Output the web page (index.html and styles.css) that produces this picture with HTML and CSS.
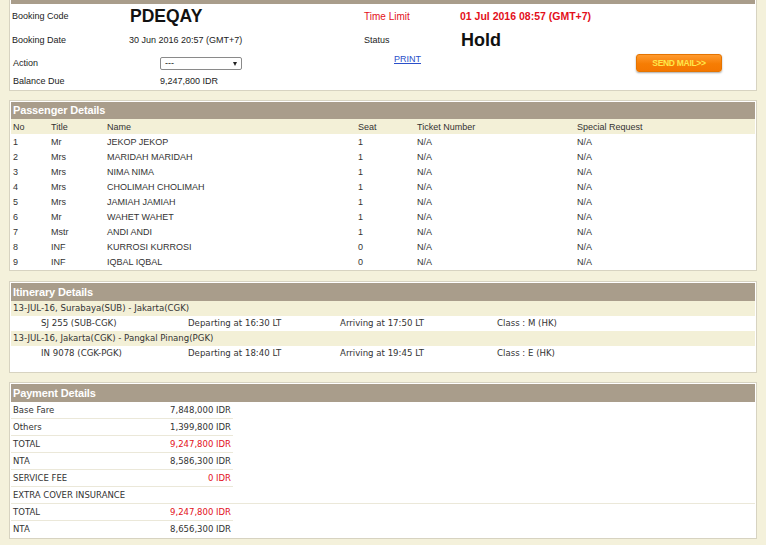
FILE: index.html
```html
<!DOCTYPE html>
<html>
<head>
<meta charset="utf-8">
<title>Booking PDEQAY</title>
<link rel="stylesheet" href="styles.css">
</head>
<body>
<div class="page">
  <section class="panel booking">
    <div class="bar"></div>
    <div class="info">
      <div class="lbl">Booking Code</div>
      <div class="code">PDEQAY</div>
      <div class="lbl red">Time Limit</div>
      <div class="limit">01 Jul 2016 08:57 (GMT+7)</div>
      <div class="lbl">Booking Date</div>
      <div class="val">30 Jun 2016 20:57 (GMT+7)</div>
      <div class="lbl">Status</div>
      <div class="status">Hold</div>
    </div>
    <div class="actions">
      <div class="lbl">Action</div>
      <div class="sel-wrap"><select class="sel"><option>---</option></select></div>
      <a class="print" href="#">PRINT</a>
      <button class="mail">SEND MAIL&gt;&gt;</button>
      <div class="lbl">Balance Due</div>
      <div class="val">9,247,800 IDR</div>
    </div>
  </section>

  <section class="panel pax-panel">
    <div class="head">Passenger Details</div>
    <table class="pax">
      <colgroup><col class="c-no"><col class="c-title"><col class="c-name"><col class="c-seat"><col class="c-ticket"><col></colgroup>
      <thead>
        <tr><th>No</th><th>Title</th><th>Name</th><th>Seat</th><th>Ticket Number</th><th>Special Request</th></tr>
      </thead>
      <tbody>
        <tr><td>1</td><td>Mr</td><td>JEKOP JEKOP</td><td>1</td><td>N/A</td><td>N/A</td></tr>
        <tr><td>2</td><td>Mrs</td><td>MARIDAH MARIDAH</td><td>1</td><td>N/A</td><td>N/A</td></tr>
        <tr><td>3</td><td>Mrs</td><td>NIMA NIMA</td><td>1</td><td>N/A</td><td>N/A</td></tr>
        <tr><td>4</td><td>Mrs</td><td>CHOLIMAH CHOLIMAH</td><td>1</td><td>N/A</td><td>N/A</td></tr>
        <tr><td>5</td><td>Mrs</td><td>JAMIAH JAMIAH</td><td>1</td><td>N/A</td><td>N/A</td></tr>
        <tr><td>6</td><td>Mr</td><td>WAHET WAHET</td><td>1</td><td>N/A</td><td>N/A</td></tr>
        <tr><td>7</td><td>Mstr</td><td>ANDI ANDI</td><td>1</td><td>N/A</td><td>N/A</td></tr>
        <tr><td>8</td><td>INF</td><td>KURROSI KURROSI</td><td>0</td><td>N/A</td><td>N/A</td></tr>
        <tr><td>9</td><td>INF</td><td>IQBAL IQBAL</td><td>0</td><td>N/A</td><td>N/A</td></tr>
      </tbody>
    </table>
  </section>

  <section class="panel">
    <div class="head">Itinerary Details</div>
    <div class="itin">
      <div class="route">13-JUL-16, Surabaya(SUB) - Jakarta(CGK)</div>
      <div class="flight"><span>SJ 255 (SUB-CGK)</span><span>Departing at 16:30 LT</span><span>Arriving at 17:50 LT</span><span>Class : M (HK)</span></div>
      <div class="route">13-JUL-16, Jakarta(CGK) - Pangkal Pinang(PGK)</div>
      <div class="flight"><span>IN 9078 (CGK-PGK)</span><span>Departing at 18:40 LT</span><span>Arriving at 19:45 LT</span><span>Class : E (HK)</span></div>
    </div>
  </section>

  <section class="panel">
    <div class="head">Payment Details</div>
    <div class="pay">
      <div class="prow"><span>Base Fare</span><span class="amt">7,848,000 IDR</span></div>
      <div class="prow"><span>Others</span><span class="amt">1,399,800 IDR</span></div>
      <div class="prow"><span>TOTAL</span><span class="amt red">9,247,800 IDR</span></div>
      <div class="prow"><span>NTA</span><span class="amt">8,586,300 IDR</span></div>
      <div class="prow"><span>SERVICE FEE</span><span class="amt red">0 IDR</span></div>
    </div>
    <div class="pay-full">EXTRA COVER INSURANCE</div>
    <div class="pay">
      <div class="prow"><span>TOTAL</span><span class="amt red">9,247,800 IDR</span></div>
      <div class="prow last"><span>NTA</span><span class="amt">8,656,300 IDR</span></div>
    </div>
  </section>
</div>
</body>
</html>
```

FILE: styles.css
```css
html, body {
  margin: 0;
  padding: 0;
}
body {
  background: #f4f1db;
  font-family: "Liberation Sans", Arial, sans-serif;
  font-size: 9px;
  color: #333;
}
.page {
  padding: 0 9px;
}
.panel {
  background: #fff;
  border: 1px solid #d7d3c1;
  padding: 1px;
  margin-bottom: 9px;
}
.booking {
  border-top: none;
  padding-top: 0;
}
.pax-panel {
  margin-bottom: 10px;
}
.bar {
  height: 4px;
  background: #a99d8b;
}
.red {
  color: #e3101a;
}
.lbl {
  color: #222;
}
.info {
  display: grid;
  grid-template-columns: 117px 235px 96px 1fr;
  grid-auto-rows: 24px;
  align-items: center;
  padding-left: 1px;
}
.info .val {
  color: #222;
}
.code {
  font-size: 17.5px;
  font-weight: bold;
  color: #111;
  padding-left: 1px;
}
.limit {
  font-size: 10.5px;
  font-weight: bold;
  color: #e3101a;
}
.info .lbl.red {
  font-size: 10px;
  color: #e3101a;
}
.status {
  font-size: 18px;
  font-weight: bold;
  color: #111;
  padding-left: 1px;
}
.actions {
  display: grid;
  grid-template-columns: 147px 233px 243px 86px;
  grid-template-rows: 18px 17px;
  align-items: center;
  padding: 2px 0 0 2px;
}
.actions .val {
  color: #222;
}
.sel-wrap {
  position: relative;
  width: 82px;
  height: 13px;
}
.sel {
  appearance: none;
  -webkit-appearance: none;
  width: 82px;
  height: 13px;
  margin: 0;
  padding: 0 0 0 4px;
  border: 1px solid #8a8a8a;
  border-radius: 2px;
  background: #fff;
  font-family: "Liberation Sans", Arial, sans-serif;
  font-size: 9px;
  line-height: 11px;
  color: #111;
}
.sel-wrap::after {
  content: "";
  position: absolute;
  right: 5px;
  top: 5px;
  border-left: 2.5px solid transparent;
  border-right: 2.5px solid transparent;
  border-top: 4px solid #222;
  pointer-events: none;
}
.print {
  align-self: start;
  color: #2b4fc9;
  text-decoration: underline;
  line-height: 10px;
  padding-left: 1px;
}
.mail {
  width: 86px;
  height: 18px;
  border: 1px solid #e57400;
  border-radius: 3px;
  background: linear-gradient(#ff9a2e, #f67d04 55%, #f47700);
  color: #ffe84a;
  font-family: "Liberation Sans", Arial, sans-serif;
  font-size: 8.5px;
  font-weight: bold;
  letter-spacing: -0.3px;
  padding: 0;
  box-shadow: 0 1px 2px rgba(0, 0, 0, 0.35);
}
.head {
  background: #a99d8b;
  color: #fff;
  font-weight: bold;
  font-size: 11px;
  height: 18px;
  line-height: 18px;
  padding-left: 2px;
  letter-spacing: -0.15px;
}
.pax-panel .head {
  height: 17px;
  line-height: 17px;
}
.pax {
  width: 100%;
  border-collapse: collapse;
  table-layout: fixed;
}
.c-no { width: 38px; }
.c-title { width: 56px; }
.c-name { width: 251px; }
.c-seat { width: 59px; }
.c-ticket { width: 160px; }
.pax th, .pax td {
  height: 15px;
  padding: 0 0 0 2px;
  text-align: left;
  font-weight: normal;
  color: #333;
  white-space: nowrap;
}
.pax th {
  background: #f3f0d7;
}
.itin {
  font-family: "DejaVu Sans", Verdana, sans-serif;
  font-size: 8.6px;
  color: #333;
  padding-bottom: 10px;
}
.route {
  background: #f3f0d7;
  height: 15px;
  line-height: 15px;
  padding-left: 2px;
}
.flight {
  display: grid;
  grid-template-columns: 147px 152px 157px 1fr;
  height: 15px;
  line-height: 15px;
  padding-left: 30px;
}
.pay {
  width: 222px;
  font-family: "DejaVu Sans", Verdana, sans-serif;
  font-size: 8.5px;
  color: #333;
}
.prow {
  display: flex;
  justify-content: space-between;
  height: 16px;
  line-height: 16px;
  padding: 0 2px;
  border-bottom: 1px solid #ebe8d9;
}
.prow.last {
  border-bottom: none;
}
.pay-full {
  font-family: "DejaVu Sans", Verdana, sans-serif;
  font-size: 8.5px;
  color: #333;
  height: 16px;
  line-height: 16px;
  padding-left: 2px;
  border-bottom: 1px solid #ebe8d9;
}
```
